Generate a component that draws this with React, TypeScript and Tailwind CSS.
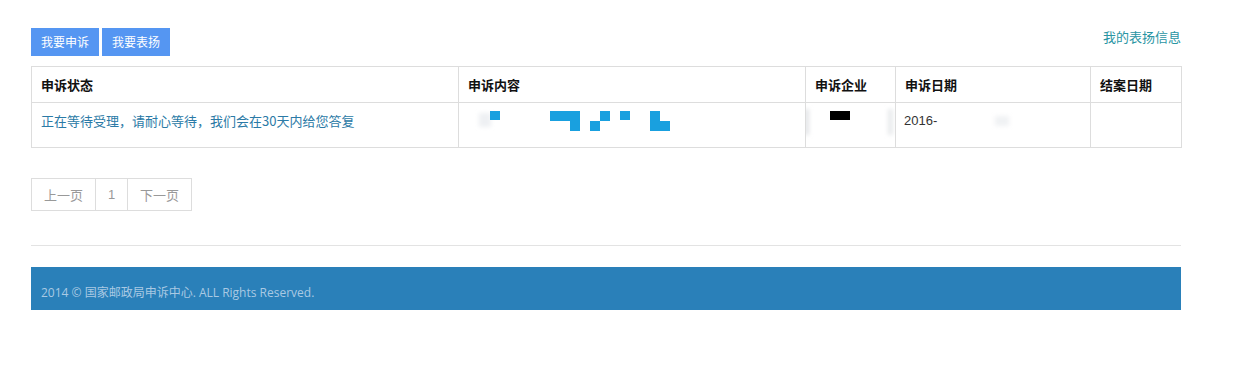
import React from "react";

const cjk = { fontFamily: '"Microsoft YaHei", "Noto Sans CJK SC", "Noto Sans", sans-serif' };

function ContentRedaction() {
  const b = "#19a0df";
  return (
    <svg width="240" height="30" viewBox="0 0 240 30" className="block">
      <defs>
        <filter id="bl" x="-50%" y="-50%" width="200%" height="200%">
          <feGaussianBlur stdDeviation="2" />
        </filter>
      </defs>
      <rect x="20" y="4" width="12" height="14" fill="#eef0f3" filter="url(#bl)" />
      <rect x="31" y="2" width="10" height="9" fill={b} />
      <rect x="91" y="2" width="30" height="10" fill={b} />
      <rect x="111" y="12" width="10" height="10" fill={b} />
      <rect x="131" y="12" width="10" height="10" fill={b} />
      <rect x="141" y="2" width="10" height="10" fill={b} />
      <rect x="161" y="2" width="10" height="9" fill={b} />
      <rect x="191" y="2" width="10" height="20" fill={b} />
      <rect x="191" y="12" width="20" height="10" fill={b} />
    </svg>
  );
}

function CompanyRedaction() {
  return (
    <svg width="89" height="36" viewBox="0 0 89 36" className="block">
      <defs>
        <filter id="bl2" x="-100%" y="-50%" width="300%" height="200%">
          <feGaussianBlur stdDeviation="2" />
        </filter>
      </defs>
      <rect x="-2" y="4" width="5" height="26" fill="#e3e5e8" filter="url(#bl2)" />
      <rect x="24" y="6" width="20" height="9" fill="#000" />
      <rect x="82" y="4" width="5" height="26" fill="#e8eaec" filter="url(#bl2)" />
    </svg>
  );
}

export default function App() {
  return (
    <div className="w-[1236px] h-[370px] bg-white" style={cjk}>
      <div className="w-[1150px] ml-[31px] pt-[28px]">
        <div className="flex items-center justify-between">
          <div className="flex gap-[3px]">
            <button className="w-[68px] h-[28px] bg-[#5596f2] text-white text-[12px] leading-[28px]">我要申诉</button>
            <button className="w-[68px] h-[28px] bg-[#5596f2] text-white text-[12px] leading-[28px]">我要表扬</button>
          </div>
          <a className="text-[13px] text-[#2a95a3] -mt-[10px]">我的表扬信息</a>
        </div>

        <table className="mt-[10px] w-[1150px] border-collapse border border-[#dddddd] text-[13px] table-fixed">
          <colgroup>
            <col className="w-[427px]" />
            <col className="w-[347px]" />
            <col className="w-[90px]" />
            <col className="w-[195px]" />
            <col className="w-[91px]" />
          </colgroup>
          <thead>
            <tr className="h-[36px]">
              {["申诉状态", "申诉内容", "申诉企业", "申诉日期", "结案日期"].map((t) => (
                <th key={t} className="border border-[#dddddd] text-left font-bold text-[#111] pl-[9px] align-middle">
                  {t}
                </th>
              ))}
            </tr>
          </thead>
          <tbody>
            <tr className="h-[45px]">
              <td className="border border-[#dddddd] pl-[9px] align-top pt-[8px] text-[#2b7aa6]">
                正在等待受理，请耐心等待，我们会在30天内给您答复
              </td>
              <td className="border border-[#dddddd] align-top pt-[6px]">
                <ContentRedaction />
              </td>
              <td className="border border-[#dddddd] align-top pt-[2px]">
                <CompanyRedaction />
              </td>
              <td className="border border-[#dddddd] pl-[8px] align-top pt-[8px] text-[#333]" style={{ fontFamily: '"Liberation Sans", Arial, sans-serif' }}>
                <div className="flex items-center">
                  <span>2016-</span>
                  <span className="ml-[58px] w-[14px] h-[10px] bg-[#f0f2f4] blur-[2px]" />
                </div>
              </td>
              <td className="border border-[#dddddd]" />
            </tr>
          </tbody>
        </table>

        <div className="mt-[30px] flex h-[33px] w-[161px] border border-[#dddddd] text-[13px] text-[#999]">
          <span className="w-[64px] flex items-center justify-center border-r border-[#dddddd]">上一页</span>
          <span className="w-[32px] flex items-center justify-center border-r border-[#dddddd]" style={{ fontFamily: '"Liberation Sans", Arial, sans-serif' }}>1</span>
          <span className="flex-1 flex items-center justify-center">下一页</span>
        </div>

        <div className="mt-[34px] h-px bg-[#e3e3e3]" />

        <div className="mt-[21px] h-[43px] bg-[#2a80b9] pl-[10px] pt-[17px] text-[12px] text-[#a9c9e3]" style={{ fontFamily: '"Open Sans", "Noto Sans CJK SC", sans-serif' }}>
          2014 © 国家邮政局申诉中心. ALL Rights Reserved.
        </div>
      </div>
    </div>
  );
}
